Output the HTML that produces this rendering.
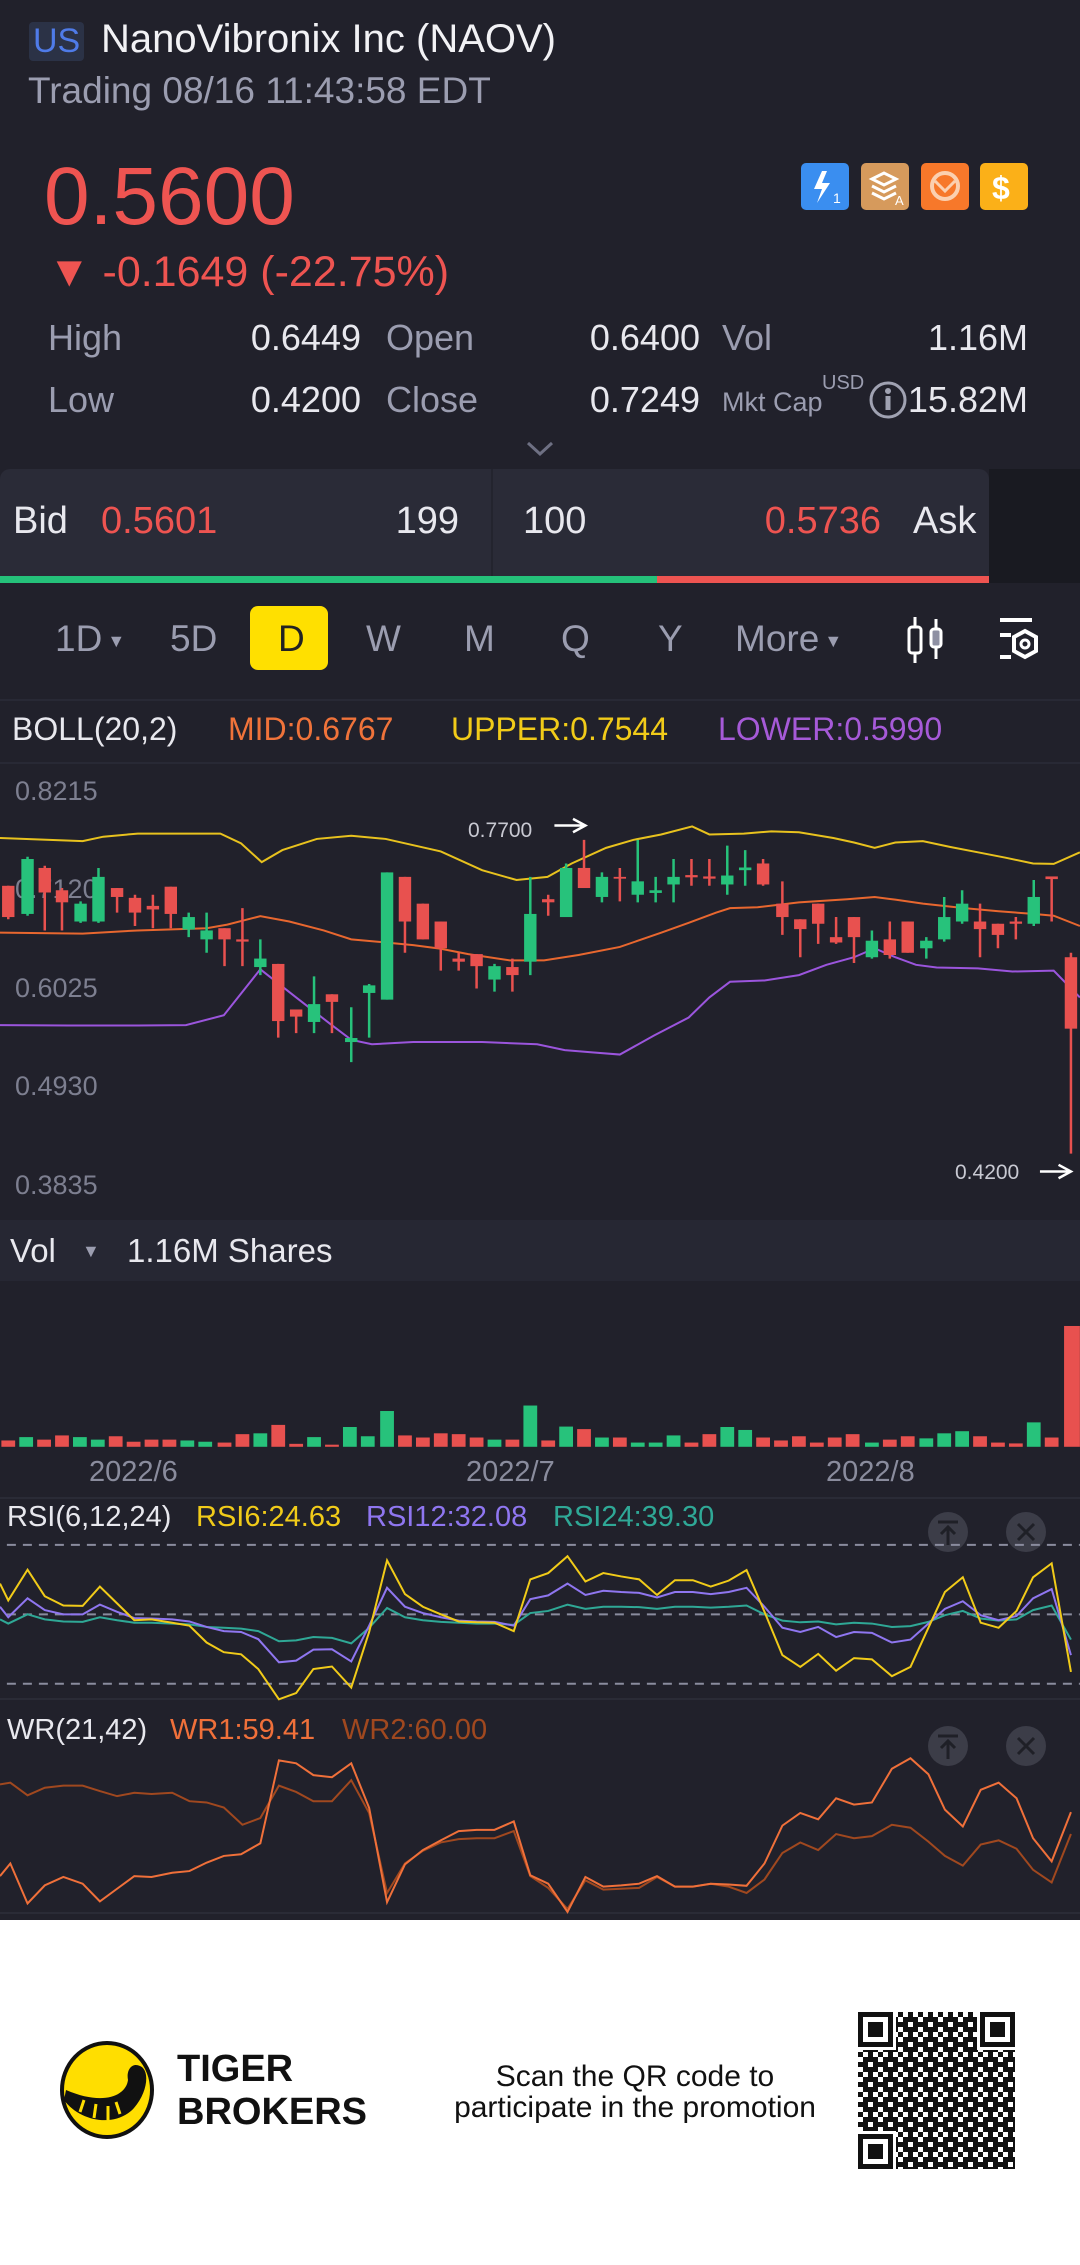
<!DOCTYPE html>
<html><head><meta charset="utf-8"><style>
*{margin:0;padding:0;box-sizing:border-box}
body{width:1080px;height:2265px;background:#21212b;position:relative;overflow:hidden;font-family:"Liberation Sans Narrow","Liberation Sans",sans-serif;color:#e8e8ee}
.t{position:absolute;white-space:nowrap;line-height:1}
.r{text-align:right}
.g{color:#9b9db0}
.red{color:#ee5451}
</style></head><body>
<div style="position:absolute;left:29px;top:22px;width:55px;height:39px;background:#2b3246;border-radius:4px"></div>
<div class="t" style="left:33px;top:24px;font-size:34px;color:#4f7be8">US</div>
<div class="t" style="left:101px;top:19px;font-size:40px;color:#f2f2f5">NanoVibronix Inc (NAOV)</div>
<div class="t g" style="left:28px;top:72px;font-size:37px">Trading 08/16 11:43:58 EDT</div>
<div class="t red" style="left:44px;top:156px;font-size:82px">0.5600</div>
<svg style="position:absolute;left:800px;top:163px" width="230" height="47">
<rect x="1" y="0" width="48" height="47" rx="5" fill="#3a8ef0"/><path d="M22 8 L14 26 L22 26 L17 40 L30 20 L22 20 L27 8Z" fill="#fff"/><text x="33" y="40" fill="#fff" font-size="14" font-family="Liberation Sans">1</text>
<rect x="61" y="0" width="48" height="47" rx="5" fill="#d69a5c"/><path d="M72 16 L84 10 L96 16 L84 22Z M72 23 L84 29 L96 23 M72 30 L84 36 L96 30" stroke="#fff" stroke-width="3" fill="none"/><text x="95" y="42" fill="#fff" font-size="13" font-family="Liberation Sans">A</text>
<rect x="121" y="0" width="48" height="47" rx="5" fill="#f7782a"/><circle cx="145" cy="23" r="13" stroke="#fbd0b0" stroke-width="4" fill="none"/><path d="M135 18 L145 28 L155 18" stroke="#fbd0b0" stroke-width="3" fill="none"/>
<rect x="180" y="0" width="48" height="47" rx="5" fill="#fbb018"/><text x="192" y="36" fill="#fff" font-size="32" font-weight="bold" font-family="Liberation Sans">$</text>
</svg>
<div class="t red" style="left:48px;top:251px;font-size:43px">▼ -0.1649 (-22.75%)</div>
<div class="t g" style="left:48px;top:320px;font-size:36px">High</div>
<div class="t r" style="left:230px;width:131px;top:320px;font-size:36px">0.6449</div>
<div class="t g" style="left:386px;top:320px;font-size:36px">Open</div>
<div class="t r" style="left:560px;width:140px;top:320px;font-size:36px">0.6400</div>
<div class="t g" style="left:722px;top:320px;font-size:36px">Vol</div>
<div class="t r" style="left:900px;width:128px;top:320px;font-size:36px">1.16M</div>
<div class="t g" style="left:48px;top:382px;font-size:36px">Low</div>
<div class="t r" style="left:230px;width:131px;top:382px;font-size:36px">0.4200</div>
<div class="t g" style="left:386px;top:382px;font-size:36px">Close</div>
<div class="t r" style="left:560px;width:140px;top:382px;font-size:36px">0.7249</div>
<div class="t g" style="left:722px;top:389px;font-size:27px">Mkt Cap</div>
<div class="t g" style="left:822px;top:373px;font-size:20px">USD</div>
<svg style="position:absolute;left:868px;top:380px" width="40" height="40"><circle cx="20" cy="20" r="17" stroke="#a0a2b2" stroke-width="3" fill="none"/><rect x="17.5" y="16" width="5" height="14" fill="#a0a2b2"/><circle cx="20" cy="11" r="3" fill="#a0a2b2"/></svg>
<div class="t r" style="left:900px;width:128px;top:382px;font-size:36px">15.82M</div>
<svg style="position:absolute;left:525px;top:440px" width="30" height="18"><path d="M3 3 L15 14 L27 3" stroke="#6e7083" stroke-width="3" fill="none"/></svg>
<div style="position:absolute;left:0;top:469px;width:989px;height:109px;background:#2a2b37;border-radius:10px 10px 0 0"></div>
<div style="position:absolute;left:989px;top:469px;width:91px;height:114px;background:#191a21"></div>
<div style="position:absolute;left:491px;top:469px;width:2px;height:107px;background:#23242e"></div>
<div class="t" style="left:13px;top:502px;font-size:38px">Bid</div>
<div class="t red" style="left:101px;top:502px;font-size:38px">0.5601</div>
<div class="t r" style="left:359px;width:100px;top:502px;font-size:38px">199</div>
<div class="t" style="left:523px;top:502px;font-size:38px">100</div>
<div class="t red r" style="left:731px;width:150px;top:502px;font-size:38px">0.5736</div>
<div class="t" style="left:913px;top:502px;font-size:38px">Ask</div>
<div style="position:absolute;left:0;top:576px;width:657px;height:7px;background:#25c17a"></div>
<div style="position:absolute;left:657px;top:576px;width:332px;height:7px;background:#ee5451"></div>
<div style="position:absolute;left:250px;top:606px;width:78px;height:64px;background:#ffe000;border-radius:8px"></div>
<div class="t g" style="left:55px;top:620px;font-size:37px">1D<span style="font-size:18px;vertical-align:middle"> ▼</span></div>
<div class="t g" style="left:170px;top:620px;font-size:37px">5D</div>
<div class="t" style="left:278px;top:620px;font-size:37px;color:#222">D</div>
<div class="t g" style="left:366px;top:620px;font-size:37px">W</div>
<div class="t g" style="left:464px;top:620px;font-size:37px">M</div>
<div class="t g" style="left:561px;top:620px;font-size:37px">Q</div>
<div class="t g" style="left:658px;top:620px;font-size:37px">Y</div>
<div class="t g" style="left:735px;top:620px;font-size:37px">More<span style="font-size:18px;vertical-align:middle"> ▼</span></div>
<svg style="position:absolute;left:903px;top:615px" width="150" height="50">
<path d="M12 2 V48 M33 4 V44" stroke="#fff" stroke-width="3"/><rect x="6" y="12" width="12" height="26" rx="3" fill="#21212b" stroke="#fff" stroke-width="3"/><rect x="28" y="14" width="10" height="18" rx="3" fill="#8e90a3" stroke="#fff" stroke-width="3"/>
<path d="M97 5 H129 M97 20 H108 M97 42 H108" stroke="#fff" stroke-width="4"/><path d="M122 16 L133 22 L133 36 L122 42 L111 36 L111 22Z" stroke="#fff" stroke-width="4" fill="none"/><circle cx="122" cy="29" r="4" stroke="#fff" stroke-width="3" fill="none"/>
</svg>
<div style="position:absolute;left:0;top:699px;width:1080px;height:2px;background:#282935"></div>
<div class="t" style="left:12px;top:713px;font-size:32px">BOLL(20,2)</div>
<div class="t" style="left:228px;top:713px;font-size:32px;color:#f0733a">MID:0.6767</div>
<div class="t" style="left:451px;top:713px;font-size:32px;color:#f1cb19">UPPER:0.7544</div>
<div class="t" style="left:718px;top:713px;font-size:32px;color:#a65ad8">LOWER:0.5990</div>
<div style="position:absolute;left:0;top:762px;width:1080px;height:2px;background:#282935"></div>
<div class="t g" style="left:15px;top:778px;font-size:27px;color:#7d7f90">0.8215</div>
<div class="t g" style="left:15px;top:876px;font-size:27px;color:#7d7f90">0.7120</div>
<div class="t g" style="left:15px;top:975px;font-size:27px;color:#7d7f90">0.6025</div>
<div class="t g" style="left:15px;top:1073px;font-size:27px;color:#7d7f90">0.4930</div>
<div class="t g" style="left:15px;top:1172px;font-size:27px;color:#7d7f90">0.3835</div>
<div class="t" style="left:468px;top:820px;font-size:21px;color:#c8c9d2">0.7700</div>
<div class="t" style="left:955px;top:1162px;font-size:21px;color:#c8c9d2">0.4200</div>
<svg style="position:absolute;left:0;top:0" width="1080" height="1920">
<g transform="translate(0,580) scale(0.68871,0.44643)" fill="none">
<path d="M805 550 H850 M832 535 L850 550 L832 565 M1510 1325 H1555 M1537 1310 L1555 1325 L1537 1340" stroke="#fff" vector-effect="non-scaling-stroke" stroke-width="2.5"/>
<polyline vector-effect="non-scaling-stroke" stroke-width="2" stroke="#e8c21e" points="0,578 120,585 150,575 200,568 320,568 350,590 380,632 410,605 460,580 510,573 560,580 640,608 700,650 750,672 795,665 830,635 880,600 920,582 960,570 1005,552 1030,570 1080,568 1120,563 1160,565 1210,578 1240,588 1270,600 1300,588 1340,585 1380,598 1420,610 1460,622 1500,635 1530,636 1568,610"/>
<polyline vector-effect="non-scaling-stroke" stroke-width="2" stroke="#e8672f" points="0,790 120,792 200,785 300,780 330,772 378,753 420,765 470,785 510,805 560,812 600,818 640,826 680,838 740,852 790,852 840,840 900,822 960,790 1000,768 1040,745 1060,735 1100,733 1160,722 1230,715 1270,710 1300,716 1340,725 1400,735 1450,742 1500,748 1530,752 1568,775"/>
<polyline vector-effect="non-scaling-stroke" stroke-width="2" stroke="#9b55dd" points="0,997 100,998 200,998 270,997 325,975 378,872 430,935 480,995 510,1030 540,1040 600,1035 700,1035 780,1040 820,1053 860,1058 900,1063 950,1020 1000,980 1030,935 1060,900 1110,897 1160,885 1200,862 1240,845 1270,825 1300,845 1330,862 1360,868 1420,870 1470,877 1530,875 1568,935"/>
<g stroke="#27c27b" stroke-width="2.5">
<path vector-effect="non-scaling-stroke" d="M40 620V752 M117 720V768 M143 645V768 M274 745V800 M300 745V835 M378 805V885 M456 888V1015 M510 957V1080 M536 905V1025 M562 655V940 M718 860V922 M770 665V885 M822 635V755 M874 655V722 M926 582V722 M952 665V722 M978 625V722 M1056 595V705 M1082 605V685 M1266 785V848 M1345 800V848 M1371 710V810 M1397 695V770 M1501 672V775"/>
</g>
<g stroke="#e8514f" stroke-width="2.5">
<path vector-effect="non-scaling-stroke" d="M12 685V760 M65 640V785 M90 690V785 M170 690V745 M196 705V775 M222 705V780 M248 687V780 M326 780V865 M352 735V865 M404 860V1025 M430 962V1015 M482 928V1015 M588 665V835 M614 725V805 M640 765V875 M666 835V875 M692 838V915 M744 848V922 M796 705V752 M848 582V690 M900 645V720 M1004 625V685 M1030 625V685 M1108 625V685 M1136 675V795 M1162 760V845 M1188 725V815 M1214 755V815 M1240 755V858 M1292 765V848 M1318 765V835 M1423 725V845 M1449 770V825 M1475 755V805 M1527 665V765 M1555 835V1285"/>
</g>
<g fill="#27c27b">
<rect x="31" y="625" width="18" height="123"/><rect x="108" y="725" width="18" height="40"/><rect x="134" y="665" width="18" height="100"/><rect x="265" y="755" width="18" height="28"/><rect x="291" y="785" width="18" height="20"/><rect x="369" y="848" width="18" height="19"/><rect x="447" y="950" width="18" height="40"/><rect x="501" y="1026" width="18" height="9"/><rect x="527" y="908" width="18" height="17"/><rect x="553" y="655" width="18" height="285"/><rect x="709" y="865" width="18" height="30"/><rect x="761" y="748" width="18" height="107"/><rect x="813" y="645" width="18" height="110"/><rect x="865" y="665" width="18" height="45"/><rect x="917" y="675" width="18" height="30"/><rect x="943" y="695" width="18" height="6"/><rect x="969" y="665" width="18" height="17"/><rect x="1047" y="662" width="18" height="20"/><rect x="1073" y="644" width="18" height="6"/><rect x="1257" y="808" width="18" height="37"/><rect x="1336" y="808" width="18" height="17"/><rect x="1362" y="755" width="18" height="50"/><rect x="1388" y="725" width="18" height="40"/><rect x="1492" y="710" width="18" height="60"/>
</g>
<g fill="#e8514f">
<rect x="3" y="685" width="18" height="70"/><rect x="56" y="645" width="18" height="55"/><rect x="81" y="695" width="18" height="27"/><rect x="161" y="690" width="18" height="20"/><rect x="187" y="712" width="18" height="33"/><rect x="213" y="730" width="18" height="8"/><rect x="239" y="687" width="18" height="61"/><rect x="317" y="780" width="18" height="25"/><rect x="343" y="805" width="18" height="5"/><rect x="395" y="860" width="18" height="128"/><rect x="421" y="962" width="18" height="16"/><rect x="473" y="928" width="18" height="17"/><rect x="579" y="665" width="18" height="100"/><rect x="605" y="725" width="18" height="80"/><rect x="631" y="765" width="18" height="60"/><rect x="657" y="848" width="18" height="7"/><rect x="683" y="838" width="18" height="27"/><rect x="735" y="867" width="18" height="18"/><rect x="787" y="715" width="18" height="7"/><rect x="839" y="645" width="18" height="45"/><rect x="891" y="665" width="18" height="4"/><rect x="995" y="661" width="18" height="5"/><rect x="1021" y="664" width="18" height="5"/><rect x="1099" y="635" width="18" height="47"/><rect x="1127" y="725" width="18" height="30"/><rect x="1153" y="760" width="18" height="22"/><rect x="1179" y="725" width="18" height="45"/><rect x="1205" y="800" width="18" height="12"/><rect x="1231" y="755" width="18" height="45"/><rect x="1283" y="805" width="18" height="35"/><rect x="1309" y="765" width="18" height="70"/><rect x="1414" y="765" width="18" height="17"/><rect x="1440" y="770" width="18" height="25"/><rect x="1466" y="765" width="18" height="5"/><rect x="1518" y="664" width="18" height="6"/><rect x="1546" y="845" width="18" height="160"/>
</g>
</g>
</svg>
<div style="position:absolute;left:0;top:1220px;width:1080px;height:61px;background:#262733"></div>
<div class="t" style="left:10px;top:1234px;font-size:33px">Vol</div>
<div class="t g" style="left:82px;top:1242px;font-size:18px">▼</div>
<div class="t" style="left:127px;top:1234px;font-size:33px">1.16M Shares</div>
<div class="t" style="left:89px;top:1458px;font-size:29px;color:#8a8c9d">2022/6</div>
<div class="t" style="left:466px;top:1458px;font-size:29px;color:#8a8c9d">2022/7</div>
<div class="t" style="left:826px;top:1458px;font-size:29px;color:#8a8c9d">2022/8</div>
<div style="position:absolute;left:0;top:1497px;width:1080px;height:2px;background:#2a2b36"></div>
<div style="position:absolute;left:0;top:1698px;width:1080px;height:2px;background:#2a2b36"></div>
<div style="position:absolute;left:0;top:1912px;width:1080px;height:2px;background:#2a2b36"></div>
<div class="t" style="left:7px;top:1503px;font-size:29px">RSI(6,12,24)</div>
<div class="t" style="left:196px;top:1503px;font-size:29px;color:#f1cb19">RSI6:24.63</div>
<div class="t" style="left:366px;top:1503px;font-size:29px;color:#8f76f0">RSI12:32.08</div>
<div class="t" style="left:553px;top:1503px;font-size:29px;color:#2fa896">RSI24:39.30</div>
<div class="t" style="left:7px;top:1716px;font-size:29px">WR(21,42)</div>
<div class="t" style="left:170px;top:1716px;font-size:29px;color:#f0703a">WR1:59.41</div>
<div class="t" style="left:342px;top:1716px;font-size:29px;color:#a0481f">WR2:60.00</div>
<svg style="position:absolute;left:0;top:0" width="1080" height="1920">
<g stroke-width="3" fill="none">
<circle cx="948" cy="1532" r="20" fill="#3c3d48"/><circle cx="1026" cy="1532" r="20" fill="#3c3d48"/>
<circle cx="948" cy="1746" r="20" fill="#3c3d48"/><circle cx="1026" cy="1746" r="20" fill="#3c3d48"/>
<path d="M938 1522H958 M948 1545V1528 M941 1534L948 1527L955 1534 M1018 1524L1034 1540 M1034 1524L1018 1540 M938 1736H958 M948 1759V1742 M941 1748L948 1741L955 1748 M1018 1738L1034 1754 M1034 1738L1018 1754" stroke="#1f2027"/>
</g>
<g transform="translate(0,1270) scale(0.68871,0.42092)" fill="none">
<path vector-effect="non-scaling-stroke" d="M10 653H1568 M10 818H1568 M10 983H1568" stroke="#8a8c9e" stroke-width="2" stroke-dasharray="9,7"/>
<g fill="#27c27b">
<rect x="28" y="397" width="20" height="23"/><rect x="106" y="397" width="20" height="23"/><rect x="132" y="403" width="20" height="17"/><rect x="262" y="405" width="20" height="15"/><rect x="288" y="408" width="20" height="12"/><rect x="368" y="388" width="20" height="32"/><rect x="446" y="397" width="20" height="23"/><rect x="498" y="373" width="20" height="47"/><rect x="524" y="395" width="20" height="25"/><rect x="552" y="335" width="20" height="85"/><rect x="708" y="403" width="20" height="17"/><rect x="760" y="322" width="20" height="98"/><rect x="812" y="372" width="20" height="48"/><rect x="864" y="398" width="20" height="22"/><rect x="916" y="410" width="20" height="10"/><rect x="942" y="410" width="20" height="10"/><rect x="968" y="393" width="20" height="27"/><rect x="1046" y="373" width="20" height="47"/><rect x="1072" y="380" width="20" height="40"/><rect x="1256" y="410" width="20" height="10"/><rect x="1335" y="400" width="20" height="20"/><rect x="1361" y="388" width="20" height="32"/><rect x="1387" y="383" width="20" height="37"/><rect x="1491" y="362" width="20" height="58"/>
</g>
<g fill="#e8514f">
<rect x="2" y="405" width="20" height="15"/><rect x="54" y="403" width="20" height="17"/><rect x="80" y="393" width="20" height="27"/><rect x="158" y="395" width="20" height="25"/><rect x="184" y="408" width="20" height="12"/><rect x="210" y="403" width="20" height="17"/><rect x="236" y="403" width="20" height="17"/><rect x="316" y="410" width="20" height="10"/><rect x="342" y="390" width="20" height="30"/><rect x="394" y="368" width="20" height="52"/><rect x="420" y="413" width="20" height="7"/><rect x="472" y="415" width="20" height="5"/><rect x="578" y="393" width="20" height="27"/><rect x="604" y="398" width="20" height="22"/><rect x="630" y="388" width="20" height="32"/><rect x="656" y="390" width="20" height="30"/><rect x="682" y="398" width="20" height="22"/><rect x="734" y="403" width="20" height="17"/><rect x="786" y="405" width="20" height="15"/><rect x="838" y="378" width="20" height="42"/><rect x="890" y="398" width="20" height="22"/><rect x="994" y="410" width="20" height="10"/><rect x="1020" y="390" width="20" height="30"/><rect x="1098" y="398" width="20" height="22"/><rect x="1124" y="405" width="20" height="15"/><rect x="1150" y="395" width="20" height="25"/><rect x="1176" y="410" width="20" height="10"/><rect x="1202" y="398" width="20" height="22"/><rect x="1228" y="390" width="20" height="30"/><rect x="1282" y="403" width="20" height="17"/><rect x="1308" y="395" width="20" height="25"/><rect x="1413" y="395" width="20" height="25"/><rect x="1439" y="410" width="20" height="10"/><rect x="1465" y="412" width="20" height="8"/><rect x="1517" y="398" width="20" height="22"/><rect x="1545" y="133" width="23" height="287"/>
</g>
<polyline vector-effect="non-scaling-stroke" stroke-width="2" stroke="#2fa896" points="0,830 12,840 40,818 65,830 92,835 120,836 145,825 170,832 195,838 220,838 250,840 275,842 300,848 325,850 350,852 375,858 405,882 430,880 455,872 482,874 510,887 536,850 562,803 588,825 614,832 640,836 666,838 692,840 718,840 746,843 770,815 796,810 824,795 850,805 876,800 902,800 928,801 954,805 980,800 1006,800 1032,802 1058,800 1084,797 1110,818 1136,833 1162,837 1188,835 1214,842 1240,838 1266,840 1295,848 1322,846 1348,836 1372,820 1398,810 1424,828 1450,833 1476,830 1500,808 1527,797 1555,878"/>
<polyline vector-effect="non-scaling-stroke" stroke-width="2" stroke="#8f76f0" points="0,800 12,825 40,780 65,808 92,818 120,818 145,795 170,812 195,827 220,828 250,830 275,835 300,848 325,858 350,860 375,877 405,932 430,928 455,902 482,901 510,930 536,845 562,755 588,800 614,815 640,825 666,833 692,835 718,836 746,845 770,782 796,773 824,745 850,772 876,762 902,765 928,767 954,778 980,765 1006,765 1032,770 1058,765 1084,755 1110,800 1136,850 1162,860 1188,848 1214,872 1240,860 1266,862 1295,885 1322,878 1348,840 1372,805 1398,787 1424,820 1450,832 1476,822 1500,780 1527,758 1555,915"/>
<polyline vector-effect="non-scaling-stroke" stroke-width="2" stroke="#f1cb19" points="0,745 12,785 40,712 65,775 92,797 120,798 145,752 170,792 195,832 220,830 250,838 275,845 300,885 325,908 350,913 375,948 405,1020 430,1005 455,948 482,942 510,992 536,860 562,690 588,770 614,800 640,818 666,835 692,837 718,838 746,858 770,735 796,720 824,680 850,740 876,720 902,728 928,735 954,772 980,737 1006,737 1032,752 1058,738 1084,713 1110,812 1136,915 1162,943 1188,912 1214,952 1240,922 1266,925 1295,965 1322,943 1348,850 1372,765 1398,730 1424,838 1450,850 1476,810 1500,730 1527,697 1555,955"/>
<polyline vector-effect="non-scaling-stroke" stroke-width="2" stroke="#a0481f" points="0,1222 15,1218 40,1248 65,1230 92,1225 120,1225 145,1238 170,1250 195,1242 220,1245 250,1242 275,1262 300,1265 325,1277 352,1318 378,1302 405,1225 430,1240 455,1262 482,1262 510,1212 536,1290 562,1480 588,1410 614,1380 640,1360 666,1352 692,1350 718,1350 746,1333 770,1440 796,1468 824,1518 850,1450 876,1472 902,1470 928,1468 954,1442 980,1465 1006,1465 1032,1458 1058,1465 1084,1480 1110,1448 1136,1385 1162,1360 1188,1378 1214,1340 1240,1350 1266,1345 1295,1318 1322,1325 1348,1358 1372,1392 1398,1415 1424,1365 1450,1355 1476,1375 1500,1425 1527,1455 1555,1340"/>
<polyline vector-effect="non-scaling-stroke" stroke-width="2" stroke="#f0703a" points="0,1440 15,1410 40,1505 65,1462 92,1442 120,1458 145,1500 170,1470 195,1440 220,1442 250,1432 275,1428 300,1408 325,1392 350,1388 378,1362 405,1165 430,1172 455,1200 482,1205 510,1172 536,1278 562,1502 588,1412 614,1378 640,1355 666,1333 692,1330 718,1330 746,1310 770,1438 796,1458 824,1525 850,1442 876,1465 902,1462 928,1458 954,1440 980,1465 1006,1465 1032,1458 1058,1460 1084,1463 1110,1410 1136,1320 1162,1290 1188,1305 1214,1255 1240,1270 1266,1265 1295,1185 1322,1160 1348,1198 1372,1282 1398,1322 1424,1235 1450,1218 1476,1255 1500,1350 1527,1405 1555,1288"/>
</g>
</svg>
<div style="position:absolute;left:0;top:1920px;width:1080px;height:345px;background:#fff"></div>
<svg style="position:absolute;left:58px;top:2040px" width="100" height="100">
<ellipse cx="49" cy="50" rx="45" ry="47" fill="#ffde00" stroke="#111" stroke-width="4"/>
<path d="M6 60 C22 82 58 88 76 68 C90 52 92 30 82 26 C74 22 68 30 70 40 C68 56 45 66 8 50Z" fill="#111"/>
<path d="M22 72 L26 60 M36 78 L38 64 M50 80 L50 66 M62 74 L58 62" stroke="#ffde00" stroke-width="3"/>
</svg>
<div class="t" style="left:177px;top:2050px;font-size:38px;color:#111;font-weight:bold">TIGER</div>
<div class="t" style="left:177px;top:2093px;font-size:38px;color:#111;font-weight:bold">BROKERS</div>
<div class="t" style="left:420px;top:2062px;width:430px;text-align:center;font-size:30px;color:#111">Scan the QR code to</div>
<div class="t" style="left:420px;top:2093px;width:430px;text-align:center;font-size:30px;color:#111">participate in the promotion</div>
<svg style="position:absolute;left:858px;top:2012px" width="157" height="157">
<defs><pattern id="q" width="20" height="20" patternUnits="userSpaceOnUse">
<rect x="0" y="0" width="5" height="5" fill="#111"/><rect x="10" y="0" width="5" height="10" fill="#111"/><rect x="5" y="5" width="5" height="5" fill="#111"/><rect x="15" y="5" width="5" height="5" fill="#111"/><rect x="0" y="10" width="10" height="5" fill="#111"/><rect x="15" y="10" width="5" height="10" fill="#111"/><rect x="5" y="15" width="5" height="5" fill="#111"/><rect x="10" y="15" width="5" height="5" fill="#111"/></pattern></defs>
<rect width="157" height="157" fill="url(#q)"/>
<g fill="#fff"><rect width="38" height="38"/><rect x="119" width="38" height="38"/><rect y="119" width="38" height="38"/></g>
<g fill="none" stroke="#111" stroke-width="5"><rect x="2.5" y="2.5" width="30" height="30"/><rect x="124.5" y="2.5" width="30" height="30"/><rect x="2.5" y="124.5" width="30" height="30"/></g>
<g fill="#111"><rect x="10" y="10" width="15" height="15"/><rect x="132" y="10" width="15" height="15"/><rect x="10" y="132" width="15" height="15"/></g>
</svg>
</body></html>
